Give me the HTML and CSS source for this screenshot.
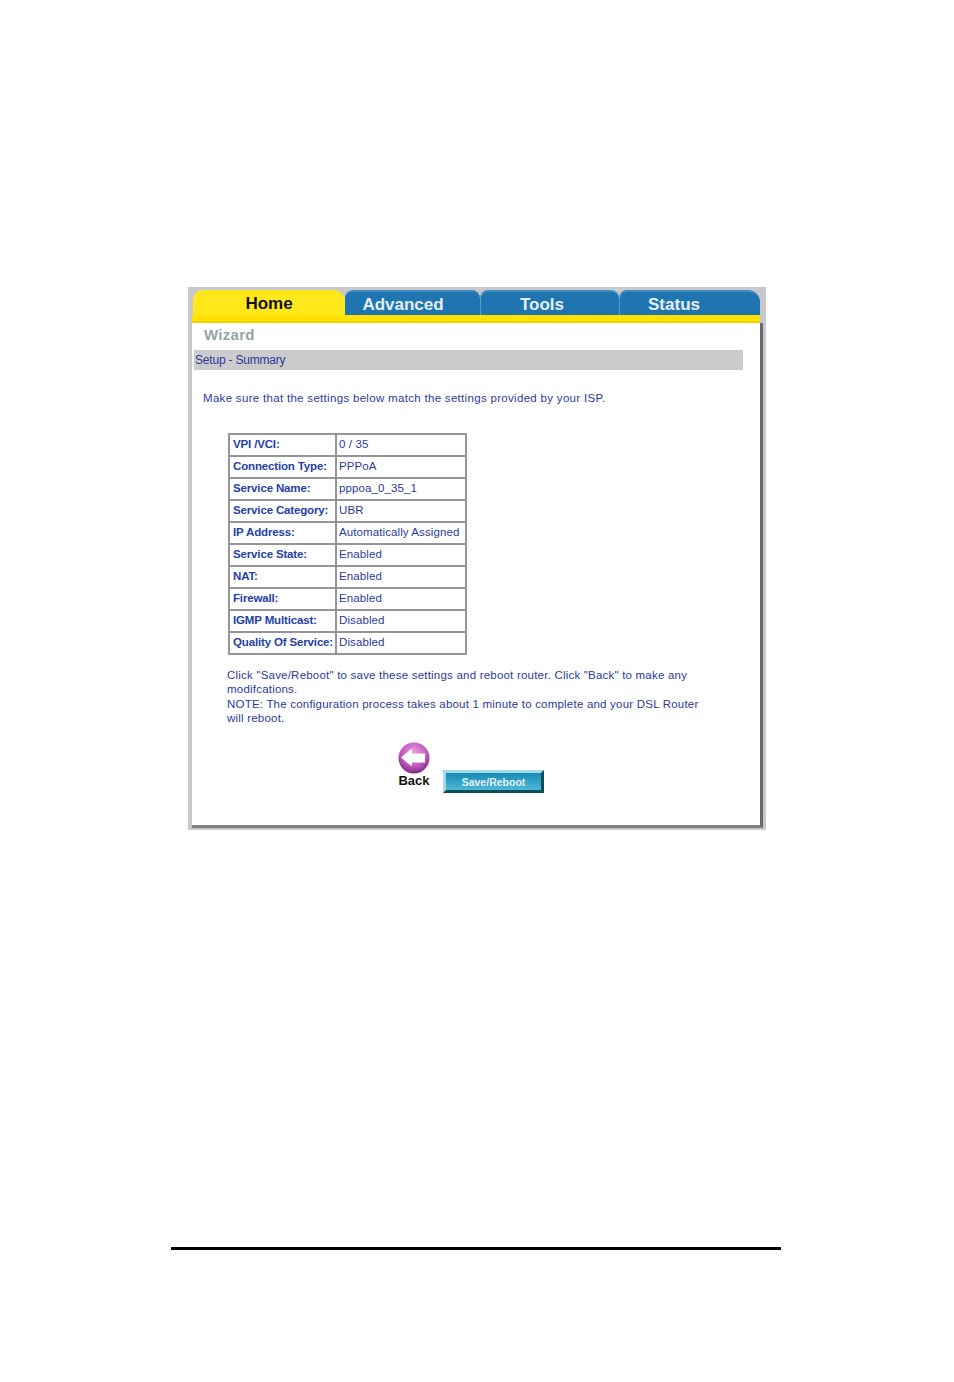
FILE: index.html
```html
<!DOCTYPE html>
<html lang="en">
<head>
    <meta charset="UTF-8">
    <title>Setup - Summary</title>
    <link rel="stylesheet" href="styles.css">
</head>
<body>
    <div class="frame">
        <div class="tabs">
            <div class="tab tab-home">Home</div>
            <div class="tab tab-advanced">Advanced</div>
            <div class="tab tab-tools">Tools</div>
            <div class="tab tab-status">Status</div>
        </div>
        <div class="tab-band"></div>
        <div class="panel">
            <h1>Wizard</h1>
            <div class="section-bar">Setup - Summary</div>
            <p class="intro">Make sure that the settings below match the settings provided by your ISP.</p>
            <table class="summary">
                <tr><th>VPI /VCI:</th><td>0 / 35</td></tr>
                <tr><th>Connection Type:</th><td>PPPoA</td></tr>
                <tr><th>Service Name:</th><td>pppoa_0_35_1</td></tr>
                <tr><th>Service Category:</th><td>UBR</td></tr>
                <tr><th>IP Address:</th><td>Automatically Assigned</td></tr>
                <tr><th>Service State:</th><td>Enabled</td></tr>
                <tr><th>NAT:</th><td>Enabled</td></tr>
                <tr><th>Firewall:</th><td>Enabled</td></tr>
                <tr><th>IGMP Multicast:</th><td>Disabled</td></tr>
                <tr><th>Quality Of Service:</th><td>Disabled</td></tr>
            </table>
            <p class="note">Click "Save/Reboot" to save these settings and reboot router. Click "Back" to make any<br>modifcations.<br>NOTE: The configuration process takes about 1 minute to complete and your DSL Router<br>will reboot.</p>
            <div class="actions">
                <div class="back">
                    <svg class="back-icon" width="34" height="32" viewBox="0 0 34 32">
                        <defs>
                            <radialGradient id="ball" cx="50%" cy="35%" r="65%">
                                <stop offset="0" stop-color="#e9a6e0"/>
                                <stop offset="0.6" stop-color="#c65cc0"/>
                                <stop offset="1" stop-color="#7d2a86"/>
                            </radialGradient>
                        </defs>
                        <circle cx="17" cy="16" r="15.5" fill="url(#ball)"/>
                        <path d="M4 15.5 L15 6.5 V11.5 H28 V20.5 H15 V24.5 Z" fill="#fff"/>
                    </svg>
                    <span>Back</span>
                </div>
                <button class="save" type="button">Save/Reboot</button>
            </div>
        </div>
    </div>
    <div class="rule"></div>
</body>
</html>
```

FILE: styles.css
```css
* {
    margin: 0;
    padding: 0;
    box-sizing: border-box;
}

body {
    background: #fff;
    padding-top: 287px;
    font-family: "Liberation Sans", Arial, sans-serif;
    color: #2b3a9e;
}

.frame {
    width: 578px;
    height: 543px;
    margin-left: 188px;
    background: #c9c9cd;
    padding: 3px 3px 2px 4px;
}

.tabs {
    display: flex;
    width: 568px;
    height: 25px;
    padding-left: 1px;
}

.tab {
    font-size: 17px;
    font-weight: bold;
    line-height: 27px;
    text-align: center;
    color: #e6eef4;
    background: #1f75b0;
    border-top: 2px solid #3d8cc2;
    border-left: 1px solid #5a9cc8;
    border-radius: 8px 8px 0 0;
}

.tab-home {
    width: 152px;
    color: #111;
    background: #ffe81a;
    border: none;
    border-radius: 10px 12px 0 0;
}

.tab-advanced { width: 135px; border-left: none; padding-right: 19px; line-height: 25px; }
.tab-tools { width: 139px; line-height: 25px; padding-right: 16px; }
.tab-status { width: 141px; border-radius: 8px 12px 0 0; padding-right: 32px; line-height: 25px; }

.tab-band {
    width: 568px;
    height: 8px;
    background: linear-gradient(#ffe000 70%, #e8c800);
}

.panel {
    height: 505px;
    padding-left: 2px;
    background: #fff;
    border-right: 3px solid #666b6f;
    border-bottom: 3px solid #7d8185;
}

h1 {
    font-size: 15px;
    font-weight: bold;
    line-height: 24px;
    padding-left: 10px;
    color: #93a5a7;
    letter-spacing: 0.3px;
}

.section-bar {
    width: 549px;
    height: 20px;
    margin-top: 3px;
    font-size: 12px;
    line-height: 20px;
    padding-left: 1px;
    background: #cbcbcb;
    letter-spacing: -0.2px;
}

.intro {
    margin-top: 20px;
    padding-left: 9px;
    font-size: 11.5px;
    line-height: 16px;
    letter-spacing: 0.31px;
}

.summary {
    margin: 27px 0 0 34px;
    width: 239px;
    border-collapse: collapse;
    table-layout: fixed;
}

.summary th,
.summary td {
    height: 22px;
    border: 2px solid #969696;
    text-align: left;
    white-space: nowrap;
    padding: 0 2px 2px;
}

.summary th {
    width: 107px;
    padding-left: 3px;
    font-size: 11.5px;
    letter-spacing: -0.15px;
    color: #2342a8;
}

.summary td {
    font-size: 11.5px;
    letter-spacing: 0.1px;
}

.note {
    margin-top: 13px;
    padding-left: 33px;
    font-size: 11.5px;
    line-height: 14.3px;
    letter-spacing: 0.21px;
}

.actions {
    display: flex;
    align-items: flex-end;
    margin: 17px 0 0 202px;
}

.back {
    display: flex;
    flex-direction: column;
    align-items: center;
    width: 36px;
    color: #111;
    font-size: 13px;
    font-weight: bold;
    line-height: 14px;
}

.back-icon {
    display: block;
}

.save {
    width: 101px;
    height: 23px;
    margin: 0 0 -5px 11px;
    font-family: inherit;
    font-size: 10.5px;
    font-weight: bold;
    color: #e2f4fa;
    background: linear-gradient(#1888b5, #4fb8d8);
    border: 3px solid;
    border-color: #9fdcec #0c4f57 #0c4f57 #9fdcec;
}

.rule {
    width: 610px;
    height: 3px;
    margin: 417px 0 0 171px;
    background: #000;
}
```
